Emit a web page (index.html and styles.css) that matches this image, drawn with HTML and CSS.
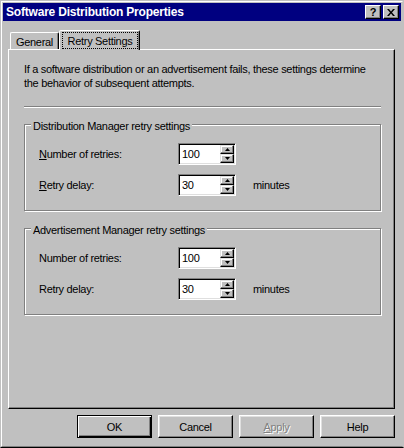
FILE: index.html
```html
<!DOCTYPE html>
<html>
<head>
<meta charset="utf-8">
<link rel="stylesheet" href="styles.css">
</head>
<body>
<div class="window">
  <div class="frame">
    <div class="titlebar">
      <span class="title">Software Distribution Properties</span>
      <div class="tbtns">
        <span class="tbtn q">?</span>
        <span class="tbtn"><svg width="8" height="7" viewBox="0 0 8 7"><path d="M0 0h2l2 2.4 2-2.4h2l-3 3.5 3 3.5h-2l-2-2.4-2 2.4h-2l3-3.5z" fill="#000"/></svg></span>
      </div>
    </div>
    <div class="content">
      <div class="tabs">
        <div class="tab">General</div>
        <div class="tab active"><span class="focus">Retry Settings</span></div>
      </div>
      <div class="panel">
        <p class="intro">If a software distribution or an advertisement fails, these settings determine<br>the behavior of subsequent attempts.</p>
        <div class="sep"></div>
        <div class="group">
          <div class="legend">Distribution Manager retry settings</div>
          <div class="row first">
            <span class="lbl"><u>N</u>umber of retries:</span>
            <div class="spin"><div class="val">100</div><div class="arrows"><div class="ab"><svg width="5" height="3" viewBox="0 0 5 3"><path d="M2.5 0L5 3H0z"/></svg></div><div class="ab"><svg width="5" height="3" viewBox="0 0 5 3"><path d="M0 0h5L2.5 3z"/></svg></div></div></div>
          </div>
          <div class="row">
            <span class="lbl"><u>R</u>etry delay:</span>
            <div class="spin"><div class="val">30</div><div class="arrows"><div class="ab"><svg width="5" height="3" viewBox="0 0 5 3"><path d="M2.5 0L5 3H0z"/></svg></div><div class="ab"><svg width="5" height="3" viewBox="0 0 5 3"><path d="M0 0h5L2.5 3z"/></svg></div></div></div>
            <span class="unit">minutes</span>
          </div>
        </div>
        <div class="group second">
          <div class="legend">Advertisement Manager retry settings</div>
          <div class="row first">
            <span class="lbl">Number of retries:</span>
            <div class="spin"><div class="val">100</div><div class="arrows"><div class="ab"><svg width="5" height="3" viewBox="0 0 5 3"><path d="M2.5 0L5 3H0z"/></svg></div><div class="ab"><svg width="5" height="3" viewBox="0 0 5 3"><path d="M0 0h5L2.5 3z"/></svg></div></div></div>
          </div>
          <div class="row">
            <span class="lbl">Retry delay:</span>
            <div class="spin"><div class="val">30</div><div class="arrows"><div class="ab"><svg width="5" height="3" viewBox="0 0 5 3"><path d="M2.5 0L5 3H0z"/></svg></div><div class="ab"><svg width="5" height="3" viewBox="0 0 5 3"><path d="M0 0h5L2.5 3z"/></svg></div></div></div>
            <span class="unit">minutes</span>
          </div>
        </div>
      </div>
      <div class="buttons">
        <div class="btn default">OK</div>
        <div class="btn">Cancel</div>
        <div class="btn disabled"><span><u>A</u>pply</span></div>
        <div class="btn">Help</div>
      </div>
    </div>
  </div>
</div>
</body>
</html>
```
FILE: styles.css
```css
html, body {
  margin: 0;
  padding: 0;
  width: 404px;
  height: 448px;
  overflow: hidden;
  background: #c0c0c0;
}
body {
  font-family: "Liberation Sans", Arial, sans-serif;
  font-size: 11px;
  letter-spacing: -0.3px;
  color: #000;
}
.window {
  box-sizing: border-box;
  width: 404px;
  height: 448px;
  border: 1px solid;
  border-color: #c0c0c0 #c0c0c0 #000 #c0c0c0;
}
.frame {
  box-sizing: border-box;
  height: 100%;
  border: 1px solid;
  border-color: #fff #c0c0c0 #808080 #fff;
  padding: 1px;
}
.titlebar {
  height: 18px;
  background: #000080;
  color: #fff;
  display: flex;
  align-items: center;
  justify-content: space-between;
  padding: 0 2px 0 3px;
}
.title {
  font-weight: bold;
  font-size: 12px;
  letter-spacing: -0.2px;
}
.tbtns {
  display: flex;
  gap: 2px;
}
.tbtn {
  box-sizing: border-box;
  width: 16px;
  height: 14px;
  background: #c0c0c0;
  border: 1px solid;
  border-color: #fff #000 #000 #fff;
  box-shadow: inset -1px -1px #808080;
  display: flex;
  align-items: center;
  justify-content: center;
  color: #000;
}
.tbtn.q {
  font-weight: bold;
  font-size: 11px;
  line-height: 1;
  letter-spacing: 0;
}
.content {
  padding: 9px 6px 0 5px;
}
.tabs {
  display: flex;
  align-items: flex-end;
  height: 19px;
  padding-left: 2px;
}
.tab {
  box-sizing: border-box;
  width: 49px;
  height: 17px;
  border: 1px solid;
  border-bottom: none;
  border-color: #fff #000 transparent #fff;
  border-radius: 2px 2px 0 0;
  box-shadow: inset -1px 0 #808080;
  display: flex;
  align-items: center;
  justify-content: center;
  padding-top: 1px;
}
.tab.active {
  width: 81px;
  height: 20px;
  margin-bottom: -1px;
  position: relative;
  z-index: 1;
  background: #c0c0c0;
  padding: 1px 1px 1px 2px;
}
.focus {
  box-sizing: border-box;
  width: 100%;
  height: 100%;
  border: 1px dotted #000;
  display: flex;
  align-items: center;
  justify-content: center;
}
.panel {
  box-sizing: border-box;
  height: 360px;
  border: 1px solid;
  border-color: #fff #000 #000 #fff;
  box-shadow: inset -1px -1px #808080;
  padding: 12px 13px 0 15px;
}
.intro {
  margin: 0;
  line-height: 14px;
}
.sep {
  margin-top: 16px;
  height: 1px;
  background: #808080;
  border-bottom: 1px solid #fff;
}
.group {
  margin-top: 16px;
  border: 1px solid #808080;
  box-shadow: inset 1px 1px #fff, 1px 1px #fff;
  padding: 0 0 14px 14px;
}
.group.second {
  margin-top: 17px;
}
.legend {
  display: table;
  margin: -6px 0 0 -8px;
  padding: 0 2px;
  background: #c0c0c0;
  line-height: 14px;
}
.row {
  display: flex;
  align-items: center;
  height: 22px;
  margin-top: 9px;
}
.row.first {
  margin-top: 10px;
}
.lbl {
  width: 139px;
}
.spin {
  box-sizing: border-box;
  width: 58px;
  height: 22px;
  border: 1px solid;
  border-color: #808080 #fff #fff #808080;
  box-shadow: inset 1px 1px #000, inset -1px -1px #dfdfdf;
  padding: 1px;
  display: flex;
}
.val {
  flex: 1;
  background: #fff;
  padding-left: 2px;
  display: flex;
  align-items: center;
  font-size: 11px;
}
.arrows {
  width: 14px;
  display: flex;
  flex-direction: column;
}
.ab {
  box-sizing: border-box;
  flex: 1;
  background: #c0c0c0;
  border: 1px solid;
  border-color: #dfdfdf #000 #000 #dfdfdf;
  box-shadow: inset -1px -1px #808080, inset 1px 1px #fff;
  display: flex;
  align-items: center;
  justify-content: center;
}
.ab svg {
  display: block;
}
.unit {
  margin-left: 17px;
}
.buttons {
  display: flex;
  justify-content: flex-end;
  gap: 6px;
  margin-top: 6px;
}
.btn {
  box-sizing: border-box;
  width: 75px;
  height: 23px;
  border: 1px solid;
  border-color: #fff #000 #000 #fff;
  box-shadow: inset -1px -1px #808080, inset 1px 1px #dfdfdf;
  display: flex;
  align-items: center;
  justify-content: center;
}
.btn.default {
  border-color: #000;
  box-shadow: inset 1px 1px #fff, inset -1px -1px #000, inset -2px -2px #808080;
}
.btn.disabled {
  color: #808080;
  text-shadow: 1px 1px 0 #fff;
}
```
